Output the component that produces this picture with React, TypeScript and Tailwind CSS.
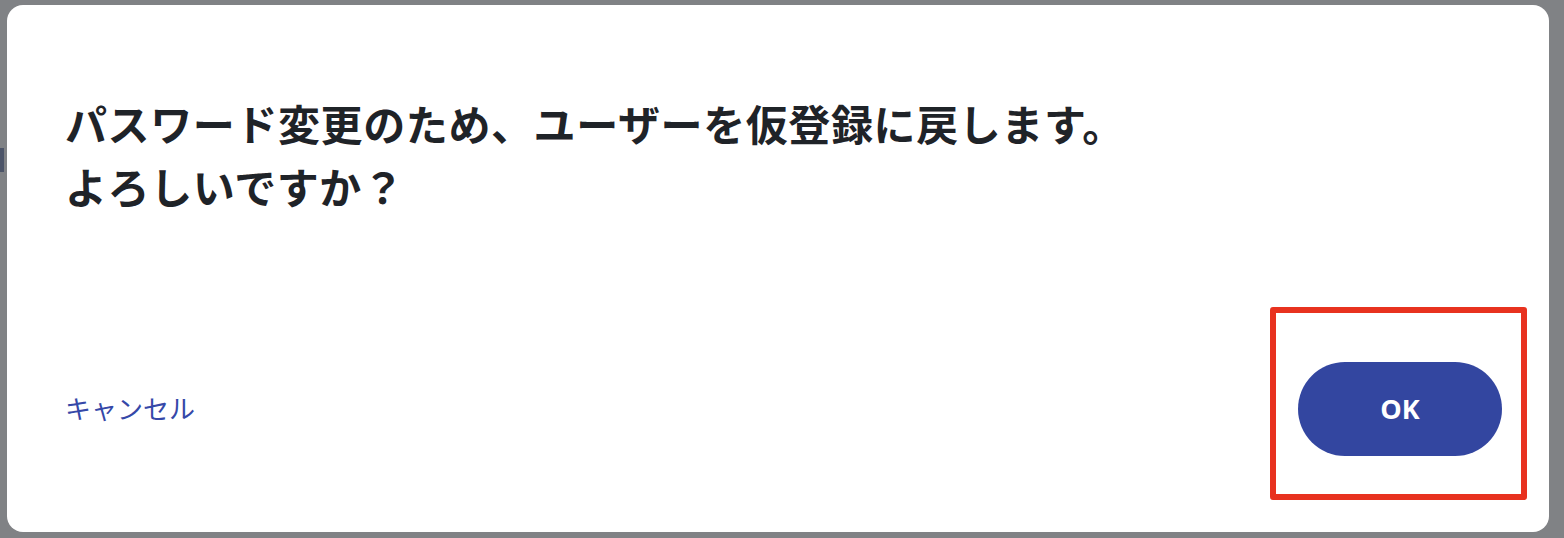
import React from "react";

const jp = { fontFamily: '"Noto Sans CJK JP", "Noto Sans", sans-serif' };

const App = () => {
  return (
    <div className="relative w-[1564px] h-[538px] bg-[#808285] overflow-hidden" style={jp}>
      {/* bit of page behind the overlay */}
      <div className="absolute left-0 top-[148px] w-[4px] h-[24px] bg-[#4c5468]" />

      <div className="ml-[7px] pt-[5px]">
        <div className="relative flex flex-col w-[1542px] h-[527px] bg-white rounded-[16px] pl-[58px] pr-[47px] pt-[86px] pb-[76px]">
          {/* Message */}
          <p className="text-[42px] leading-[63px] font-semibold text-[#1f2328] tracking-[0.6px]">
            パスワード変更のため、ユーザーを仮登録に戻します。
            <br />
            よろしいですか？
          </p>

          {/* Actions */}
          <div className="mt-auto flex items-center justify-between">
            <button type="button" className="text-[26px] leading-none text-[#3548a8] pb-[2px]">
              キャンセル
            </button>
            <div className="relative">
              <button
                type="button"
                className="w-[204px] h-[94px] rounded-full bg-[#3346a0] text-white text-[27px] font-bold"
                style={{ fontFamily: '"Open Sans", "Liberation Sans", sans-serif' }}
              >
                OK
              </button>
              {/* highlight annotation */}
              <div className="absolute -left-[28px] -top-[55px] -right-[25px] -bottom-[44px] border-[6px] border-[#e8321f] rounded-[3px] pointer-events-none" />
            </div>
          </div>
        </div>
      </div>
    </div>
  );
};

export default App;
